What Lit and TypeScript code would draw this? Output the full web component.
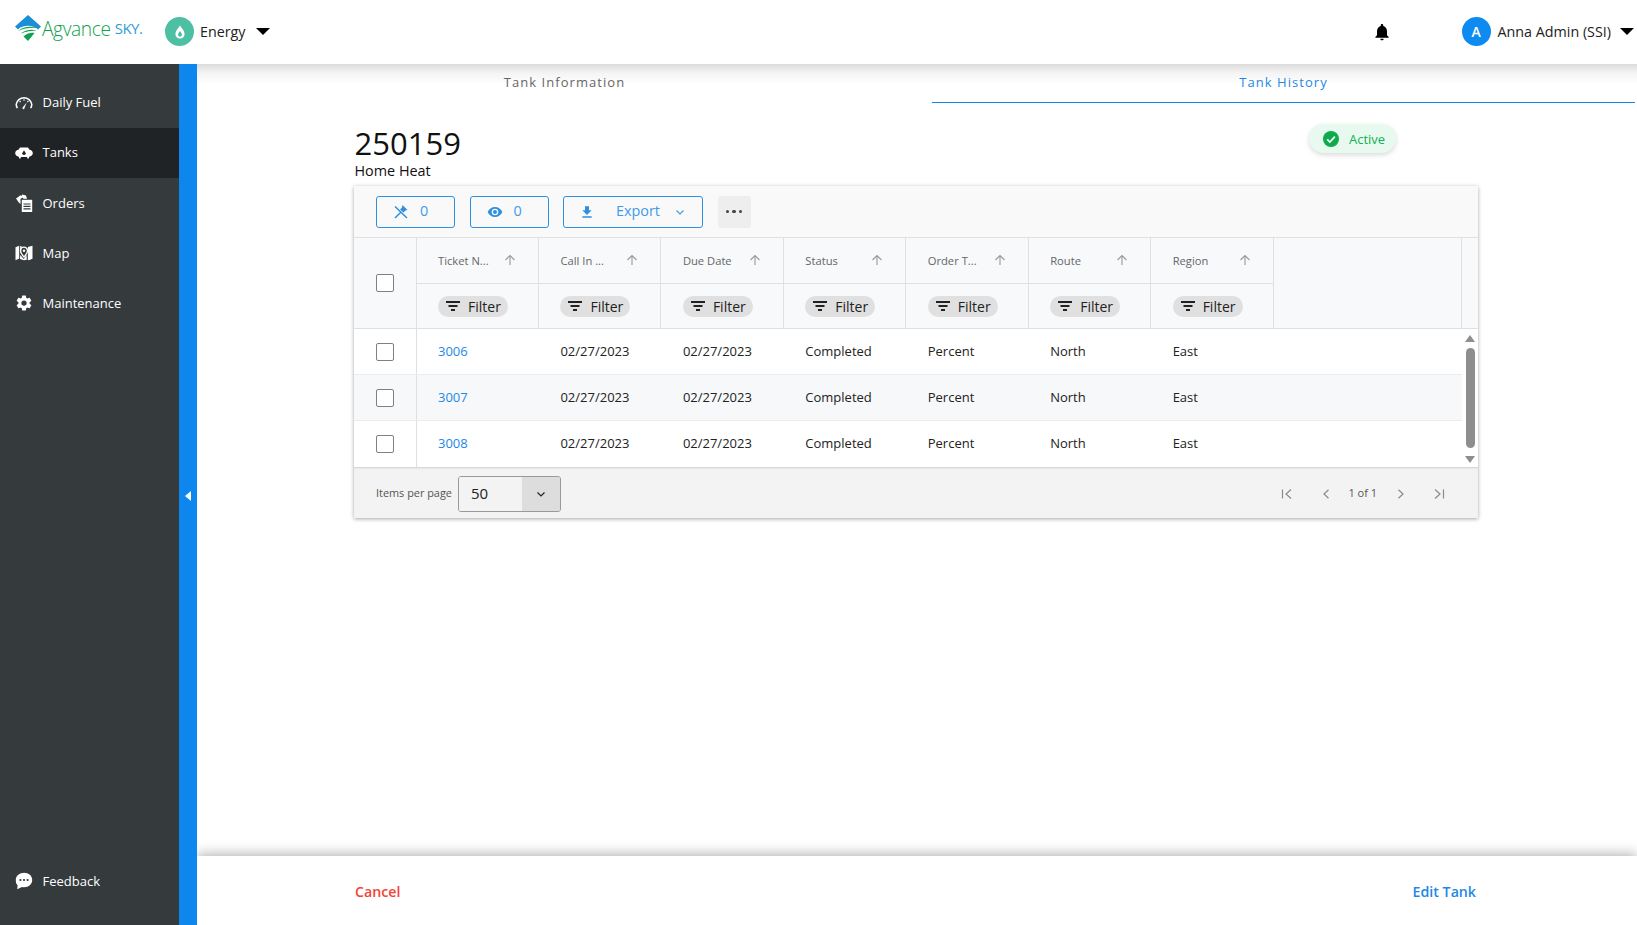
import { LitElement, html, css, svg } from "lit";
import { customElement } from "lit/decorators.js";

const icons: Record<string, any> = {
  gauge: svg`<svg viewBox="0 0 18 18" width="18" height="18" fill="none" stroke="#fff"><path d="M2.400 14.200A7.600 7.600 0 0 1 1.200 10.400 7.900 7.900 0 0 1 16.800 10.400a7.600 7.600 0 0 1-1.200 3.800" stroke-width="1.500"/><path d="M9 5.200v1.600M4.600 7l1 1M13.400 7l-1 1" stroke-width="1.200"/><path d="M7.600 13.600 11.600 8.600 9.400 14.600a1 1 0 0 1-1.800-1z" fill="#fff" stroke="none"/></svg>`,
  tank: svg`<svg viewBox="0 0 18 18" width="18" height="18"><path d="M5 3.600h8c.8 1 1 1.600 1.200 2 2 .4 3.600 1.800 3.600 3.600s-1.600 3.200-3.600 3.600l-.4 1.600h-1.400l-.3-1.400H5.900l-.3 1.400H4.200l-.4-1.600C1.800 12.400.2 11 .2 9.200s1.600-3.200 3.600-3.600C4 5.200 4.200 4.600 5 3.600z" fill="#fff"/><path d="M9 6.200 10.800 9.200a1.800 1.800 0 1 1-3.600 0z" fill="#1f2325"/></svg>`,
  orders: svg`<svg viewBox="0 0 18 18" width="18" height="18"><path d="M6.800 5.800h10.400V18H6.800z" fill="#fff"/><path d="M8.500 10h7M8.500 12.400h7M8.500 14.800h7" stroke="#353a3d" stroke-width="1.200"/><path d="M1 4.500 5.500 1.200 8 3.500 5.500 4.800V10L3.800 8.600zM7 .5l4 1 1 3.200H8.500L6.500 2z" fill="#fff"/></svg>`,
  map: svg`<svg viewBox="0 0 18 18" width="18" height="18"><path d="M.5 3.200 4.200 1.800V14.600L.5 16.200zM5.200 1.800 7 2.800 5.800 8.500 5.200 9zM12.800 3 17.500 1.800V14.800L13.800 16.200 12.800 15.800zM5.200 11 8.800 15l2.800-4 .2 4.800-2.900 .4-3.900-1.200z" fill="#fff"/><path d="M9 3.200a3.500 3.500 0 0 1 3.500 3.500C12.500 9 9 13 9 13S5.500 9 5.500 6.700A3.500 3.500 0 0 1 9 3.200z" fill="none" stroke="#fff" stroke-width="1.300"/><circle cx="9" cy="6.700" r="1.200" fill="#fff"/></svg>`,
  gear: svg`<svg viewBox="0 0 24 24" width="18" height="18"><path fill="#fff" d="M19.430 12.980c.04-.32.07-.64.07-.98s-.03-.66-.07-.98l2.110-1.650c.19-.15.24-.42.12-.64l-2-3.460c-.12-.22-.39-.3-.61-.22l-2.490 1c-.52-.4-1.080-.73-1.690-.98l-.38-2.650A.488.488 0 0 0 14 2h-4c-.25 0-.46.18-.49.42l-.38 2.650c-.61.25-1.170.59-1.690.98l-2.490-1c-.23-.09-.49 0-.61.22l-2 3.460c-.13.22-.07.49.12.64l2.110 1.650c-.04.32-.07.65-.07.98s.03.66.07.98l-2.110 1.650c-.19.15-.24.42-.12.64l2 3.460c.12.22.39.3.61.22l2.490-1c.52.4 1.080.73 1.690.98l.38 2.650c.03.24.24.42.49.42h4c.25 0 .46-.18.49-.42l.38-2.650c.61-.25 1.170-.59 1.690-.98l2.490 1c.23.09.49 0 .61-.22l2-3.460c.12-.22.07-.49-.12-.64l-2.110-1.650zM12 15.500a3.500 3.500 0 1 1 0-7 3.500 3.500 0 0 1 0 7z"/></svg>`,
  feedback: svg`<svg viewBox="0 0 18 18" width="18" height="18"><path d="M9.200.8c4.500 0 8 3 8 7.200s-3.500 7.200-8 7.200c-.8 0-1.500-.1-2.200-.3L2.200 17.200l.4-3.900C1.200 12 .8 10 .8 8 .8 3.800 4.700.8 9.200.8z" fill="#fff"/><circle cx="5.400" cy="8" r="1.100" fill="#353a3d"/><circle cx="9" cy="8" r="1.100" fill="#353a3d"/><circle cx="12.600" cy="8" r="1.100" fill="#353a3d"/></svg>`,
  bell: svg`<svg viewBox="0 0 24 24" width="20" height="20"><path fill="#000" d="M12 22c1.100 0 2-.9 2-2h-4c0 1.100.9 2 2 2zm6-6v-5c0-3.070-1.630-5.640-4.500-6.320V4c0-.83-.67-1.500-1.500-1.500s-1.500.67-1.500 1.500v.68C7.640 5.360 6 7.920 6 11v5l-2 2v1h16v-1l-2-2z"/></svg>`,
  drop: svg`<svg viewBox="0 0 16 16" width="16" height="16"><path d="M8 1.500C10 4.500 12.600 7 12.600 10a4.600 4.600 0 0 1-9.200 0C3.400 7 6 4.500 8 1.500z" fill="#fff"/><path d="M8 7c.9 1.400 2 2.400 2 3.700a2 2 0 0 1-4 0C6 9.400 7.100 8.400 8 7z" fill="#4dbfa3"/></svg>`,
  pin: svg`<svg viewBox="0 0 16 16" width="16" height="16" fill="none" stroke="#2f8fdf"><path d="M2 14 7.500 8.500M2 2.500 14 14" stroke-width="1.500"/><path d="M9.500 1 14.500 6 12.500 6.500 10.500 8.500 7 5.500 9 3.500z" fill="#2f8fdf" stroke="none"/></svg>`,
  eye: svg`<svg viewBox="0 0 24 24" width="16" height="16"><path fill="#2f8fdf" d="M12 4.500C7 4.500 2.730 7.610 1 12c1.730 4.390 6 7.500 11 7.500s9.270-3.110 11-7.500c-1.730-4.390-6-7.500-11-7.500zM12 17a5 5 0 1 1 0-10 5 5 0 0 1 0 10zm0-8a3 3 0 1 0 0 6 3 3 0 0 0 0-6z"/></svg>`,
  download: svg`<svg viewBox="0 0 24 24" width="16" height="16"><path fill="#2f8fdf" d="M19 9.500h-4v-6H9v6H5l7 7 7-7zM5 18.500v2h14v-2H5z"/></svg>`,
  chev: svg`<svg viewBox="0 0 12 12" width="12" height="12" fill="none" stroke="currentColor" stroke-width="1.200"><path d="M2.500 4.500 6 8l3.500-3.500"/></svg>`,
  up: svg`<svg viewBox="0 0 12 12" width="12" height="12" fill="none" stroke="#9a9a9a" stroke-width="1.100"><path d="M6 11V1.500M1.500 6 6 1.500 10.500 6"/></svg>`,
  filter: svg`<svg viewBox="0 0 14 10" width="14" height="10"><path d="M0 0h14v2H0zM2.500 4h9v2h-9zM5 8h4v2H5z" fill="#222"/></svg>`,
  check: svg`<svg viewBox="0 0 16 16" width="16" height="16"><circle cx="8" cy="8" r="8" fill="#0dab4c"/><path d="M4.200 8.300 6.900 11l5-5.400" fill="none" stroke="#fff" stroke-width="1.700"/></svg>`,
  first: svg`<svg viewBox="0 0 12 12" width="12" height="12" fill="none" stroke="#8a8a8a" stroke-width="1.200"><path d="M1.500 1.500v9M10 1.500 5 6l5 4.500"/></svg>`,
  prev: svg`<svg viewBox="0 0 12 12" width="12" height="12" fill="none" stroke="#8a8a8a" stroke-width="1.200"><path d="M8.500 1.800 4 6l4.500 4.200"/></svg>`,
  next: svg`<svg viewBox="0 0 12 12" width="12" height="12" fill="none" stroke="#8a8a8a" stroke-width="1.200"><path d="M3.500 1.800 8 6l-4.500 4.200"/></svg>`,
  last: svg`<svg viewBox="0 0 12 12" width="12" height="12" fill="none" stroke="#8a8a8a" stroke-width="1.200"><path d="M10.500 1.500v9M2 1.500 7 6l-5 4.500"/></svg>`,
  logo: svg`<svg viewBox="0 0 28 26" width="28" height="26"><path d="M14 0 27 11.500 24 14.500C19.500 9.500 8.500 9.500 4 14.500L1 11.500z" fill="#1a8fd8"/><path d="M4.500 16C9 11 19.500 11 25 13c-6-.5-15-.5-20.500 3z" fill="#0fa14f"/><path d="M6.500 18.800C11 14.500 18 14 23 15.500c-5 .2-11.500 .8-16.500 3.300z" fill="#0fa14f"/><path d="M9.500 21.500C13 18 17.500 17.500 20.500 18L14 26z" fill="#0fa14f"/></svg>`,
};

const nav = [
  ["gauge", "Daily Fuel"],
  ["tank", "Tanks"],
  ["orders", "Orders"],
  ["map", "Map"],
  ["gear", "Maintenance"],
];
const cols = ["Ticket N...", "Call In ...", "Due Date", "Status", "Order T...", "Route", "Region"];
const rows = ["3006", "3007", "3008"];

@customElement("app-root")
export class AppRoot extends LitElement {
  static styles = css`
    :host { display: flex; flex-direction: column; height: 925px; width: 1637px; overflow: hidden; font-family: "Open Sans", sans-serif; font-size: 13px; color: #222; background: #fff; }
    svg { display: block; flex: none; }
    .top { height: 64px; flex: none; display: flex; align-items: center; background: #fff; padding-left: 14px; }
    .logo { display: flex; align-items: center; width: 151px; margin-top: -8px; }
    .logo-a { font-weight: 300; font-size: 19.200px; letter-spacing: -.4px; color: #0fa14f; margin-right: 4px; }
    .logo-s { font-size: 15px; letter-spacing: -.5px; color: #2f9ddb; }
    .circ { width: 29px; height: 29px; border-radius: 50%; display: flex; align-items: center; justify-content: center; flex: none; }
    .circ.e { background: #4dbfa3; }
    .circ.a { background: #0d8bf0; color: #fff; font-size: 14px; font-weight: 600; }
    .lbl { font-size: 14.300px; color: #222; margin-left: 7px; }
    .caret { width: 0; height: 0; border-left: 7px solid transparent; border-right: 7px solid transparent; border-top: 7px solid #000; flex: none; }
    .energy { display: flex; align-items: center; margin-top: -1px; }
    .energy .lbl { margin-left: 6px; }
    .energy .caret { margin-left: 10px; }
    .spacer { flex: 1; }
    .bell { margin-right: 70px; }
    .user { display: flex; align-items: center; margin-right: 3px; margin-top: -1px; }
    .user .caret { margin-left: 9px; }
    .user .lbl { margin-top: -1px; }
    .main { flex: 1; display: flex; min-height: 0; }
    .side { width: 179px; flex: none; background: #353a3d; display: flex; flex-direction: column; padding-top: 14px; color: #fff; }
    .item { height: 50px; display: flex; align-items: center; gap: 9.500px; padding-left: 15px; flex: none; }
    .item.raise span { margin-top: -2px; }
    .item.on { background: #1f2325; }
    .side .grow { flex: 1; }
    .fb { margin-bottom: 19px; }
    .strip { width: 18px; flex: none; background: #0d86ee; display: flex; align-items: center; justify-content: center; }
    .tri { width: 0; height: 0; border-top: 5px solid transparent; border-bottom: 5px solid transparent; border-right: 6px solid #fff; margin-top: 2px; }
    .content { flex: 1; display: flex; flex-direction: column; min-width: 0; overflow: hidden; }
    .tabs { display: grid; grid-template-columns: 735px 703px 1fr; height: 39px; flex: none; background: linear-gradient(#dcdcdc, #f4f4f4 9px, #fff 20px); }
    .tab { display: flex; align-items: center; justify-content: center; letter-spacing: 1.050px; color: #666; padding-bottom: 3px; font-size: 13px; }
    .tab.on { color: #1e88e5; border-bottom: 1.500px solid #0d86ee; }
    .body { flex: 1; padding: 0 159px 0 157px; min-height: 0; }
    .head { height: 83px; display: flex; justify-content: space-between; }
    .id { font-size: 31px; line-height: 40px; margin: 20px 0 0 .5px; color: #111; }
    .sub { font-size: 14.400px; line-height: 18px; margin: -1px 0 0 .5px; color: #111; }
    .badge { margin: 21px 82px 0 0; height: 29px; width: 87px; box-sizing: border-box; padding-left: 14px; border-radius: 15px; background: #e8faf0; display: flex; align-items: center; gap: 10px; color: #13b155; box-shadow: 0 2px 5px rgba(0,0,0,.15); }
    .card { box-shadow: 0 1px 4px rgba(0,0,0,.35); background: #fff; }
    .tools { height: 52px; box-sizing: border-box; display: flex; align-items: center; gap: 14.500px; padding-left: 22px; background: #f9f9fa; border-bottom: 1px solid #e0e0e0; }
    .btn { height: 32px; box-sizing: border-box; border: 1px solid #2f8fdf; border-radius: 3px; color: #3f9be8; display: flex; align-items: center; font-size: 14.400px; }
    .btn span { margin-top: -2px; }
    .btn.s { width: 79px; padding-left: 16px; gap: 11px; }
    .btn.x { width: 140px; padding-left: 15px; }
    .btn.x span { margin-left: 21px; }
    .btn.x svg:last-child { margin-left: 14px; color: #3f9be8; }
    .more { width: 33px; height: 32px; background: #eee; border-radius: 3px; display: flex; align-items: center; justify-content: center; gap: 3px; }
    .more i { width: 3.500px; height: 3.500px; border-radius: 50%; background: #444; }
    .thead { display: grid; grid-template-columns: 62.500px repeat(7, 122.450px) 1fr 16px; grid-template-rows: 46px 44px; height: 90px; background: #f8f9fb; border-bottom: 1px solid #e0e0e0; box-sizing: content-box; }
    .cbh { grid-row: 1 / 3; display: flex; align-items: center; padding-left: 22px; border-right: 1px solid #e0e0e0; }
    .cb { width: 18px; height: 18px; box-sizing: border-box; border: 1px solid #808080; border-radius: 2px; background: #fff; }
    .th { display: flex; align-items: center; padding-left: 21.500px; border-right: 1px solid #e0e0e0; color: #666; font-size: 11.200px; border-bottom: 1px solid #e0e0e0; box-sizing: border-box; position: relative; }
    .th svg { position: absolute; right: 22px; top: 16px; }
    .tf { display: flex; align-items: center; padding-left: 21.500px; border-right: 1px solid #e0e0e0; }
    .pill { width: 70px; height: 21px; border-radius: 11px; background: #e0e0e0; display: flex; align-items: center; gap: 8px; padding-left: 8px; box-sizing: border-box; font-size: 14px; color: #222; }
    .fill { grid-row: 1 / 3; grid-column: 9; border-right: 1px solid #e0e0e0; }
    .sbh { grid-row: 1 / 3; grid-column: 10; }
    .tbody { display: flex; }
    .rows { flex: 1; min-width: 0; }
    .row { display: grid; grid-template-columns: 62.500px repeat(7, 122.450px) 1fr; height: 46px; align-items: center; border-bottom: 1px solid #ececec; box-sizing: border-box; }
    .row:nth-child(even) { background: #f7f8fa; }
    .row:last-child { border-bottom: none; }
    .rcb { height: 100%; display: flex; align-items: center; padding-left: 22px; border-right: 1px solid #e0e0e0; box-sizing: border-box; }
    .td { padding: 0 0 2px 21.500px; color: #222; }
    .td.link { color: #1e88e5; }
    .sb { width: 16px; flex: none; display: flex; flex-direction: column; align-items: center; background: #fff; padding-top: 6px; box-sizing: border-box; }
    .sb .u { width: 0; height: 0; border-left: 5px solid transparent; border-right: 5px solid transparent; border-bottom: 7px solid #8e8e8e; }
    .sb .t { width: 9px; height: 100px; border-radius: 5px; background: #8e8e8e; margin: 6px 0 8px; }
    .sb .d { width: 0; height: 0; border-left: 5px solid transparent; border-right: 5px solid transparent; border-top: 7px solid #8e8e8e; }
    .foot { height: 51px; box-sizing: border-box; padding: 2px 0 0 22px; display: flex; align-items: center; background: #f3f3f3; box-shadow: inset 0 2px 2px -1px rgba(0,0,0,.15); }
    .ipp { font-size: 10.900px; color: #555; width: 82px; flex: none; margin-top: -3px; }
    .sel { width: 103px; height: 36px; box-sizing: border-box; border: 1px solid #999; border-radius: 3px; display: grid; grid-template-columns: 63px 1fr; overflow: hidden; font-size: 15px; }
    .sel span { display: flex; align-items: center; padding: 0 0 2px 12px; background: #f3f3f3; }
    .sel div { background: #ddd; display: flex; align-items: center; justify-content: center; color: #222; }
    .pager { margin-left: auto; display: flex; align-items: center; padding-right: 33px; }
    .pager .pg { font-size: 11px; color: #555; margin: -3px 18px 0 16px; }
    .gap1 { margin-right: 27px; }
    .gap2 { margin-left: 26px; }
    .bottom { height: 69px; box-sizing: border-box; padding: 2px 161px 0 158px; flex: none; display: flex; justify-content: space-between; align-items: center; background: #fff; box-shadow: 0 -2px 12px rgba(0,0,0,.3); font-size: 14.200px; font-weight: 600; position: relative; }
    .cancel { color: #f44336; }
    .edit { color: #1e88e5; }
  `;

  render() {
    return html`
      <div class="top">
        <div class="logo">
          ${icons.logo}
          <span class="logo-a">Agvance</span><span class="logo-s">SKY.</span>
        </div>
        <div class="energy">
          <div class="circ e">${icons.drop}</div>
          <span class="lbl">Energy</span>
          <div class="caret"></div>
        </div>
        <div class="spacer"></div>
        <div class="bell">${icons.bell}</div>
        <div class="user">
          <div class="circ a">A</div>
          <span class="lbl">Anna Admin (SSI)</span>
          <div class="caret"></div>
        </div>
      </div>
      <div class="main">
        <nav class="side">
          ${nav.map(([i, t], n) => html`<div class="item ${t === "Tanks" ? "on" : ""} ${n < 2 ? "raise" : ""}">${icons[i]}<span>${t}</span></div>`)}
          <div class="grow"></div>
          <div class="item fb">${icons.feedback}<span>Feedback</span></div>
        </nav>
        <div class="strip"><div class="tri"></div></div>
        <div class="content">
          <div class="tabs">
            <div class="tab">Tank Information</div>
            <div class="tab on">Tank History</div>
          </div>
          <div class="body">
            <div class="head">
              <div>
                <div class="id">250159</div>
                <div class="sub">Home Heat</div>
              </div>
              <div class="badge">${icons.check}<span>Active</span></div>
            </div>
            <div class="card">
              <div class="tools">
                <div class="btn s">${icons.pin}<span>0</span></div>
                <div class="btn s">${icons.eye}<span>0</span></div>
                <div class="btn x">${icons.download}<span>Export</span>${icons.chev}</div>
                <div class="more"><i></i><i></i><i></i></div>
              </div>
              <div class="thead">
                <div class="cbh"><div class="cb"></div></div>
                ${cols.map((c) => html`<div class="th">${c}${icons.up}</div>`)}
                <div class="fill"></div>
                <div class="sbh"></div>
                ${cols.map(() => html`<div class="tf"><div class="pill">${icons.filter}<span>Filter</span></div></div>`)}
              </div>
              <div class="tbody">
                <div class="rows">
                  ${rows.map(
                    (r) => html`<div class="row">
                      <div class="rcb"><div class="cb"></div></div>
                      <div class="td link">${r}</div>
                      <div class="td">02/27/2023</div>
                      <div class="td">02/27/2023</div>
                      <div class="td">Completed</div>
                      <div class="td">Percent</div>
                      <div class="td">North</div>
                      <div class="td">East</div>
                      <div></div>
                    </div>`
                  )}
                </div>
                <div class="sb"><div class="u"></div><div class="t"></div><div class="d"></div></div>
              </div>
              <div class="foot">
                <span class="ipp">Items per page</span>
                <div class="sel"><span>50</span><div>${icons.chev}</div></div>
                <div class="pager">
                  <span class="gap1">${icons.first}</span>
                  ${icons.prev}
                  <span class="pg">1 of 1</span>
                  ${icons.next}
                  <span class="gap2">${icons.last}</span>
                </div>
              </div>
            </div>
          </div>
          <div class="bottom"><span class="cancel">Cancel</span><span class="edit">Edit Tank</span></div>
        </div>
      </div>
    `;
  }
}
